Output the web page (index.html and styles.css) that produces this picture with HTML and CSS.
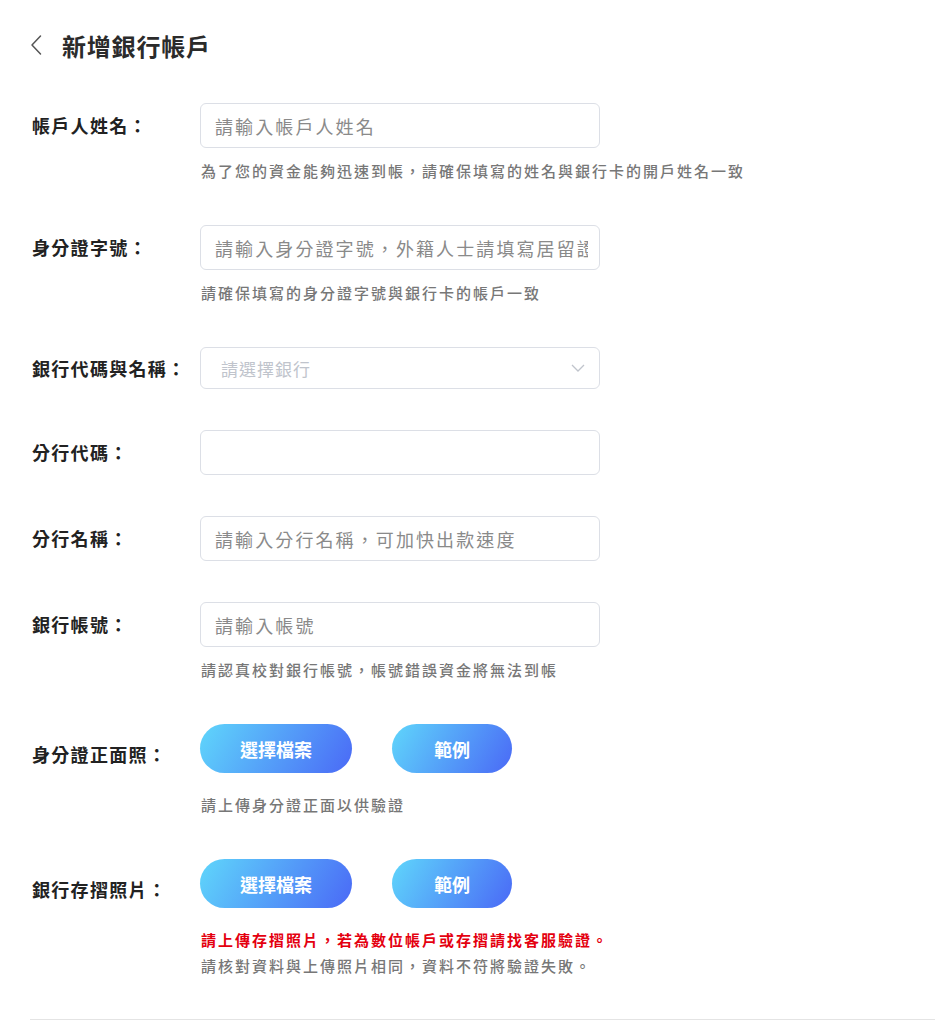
FILE: index.html
```html
<!DOCTYPE html>
<html lang="zh-Hant">
<head>
<meta charset="utf-8">
<title>新增銀行帳戶</title>
<link rel="stylesheet" href="styles.css">
</head>
<body>
<div class="page">
  <header class="header">
    <svg class="back" width="14" height="22" viewBox="0 0 14 22"><path d="M10.5 2 L2 11 L10.5 20" fill="none" stroke="#555" stroke-width="1.5" stroke-linecap="round" stroke-linejoin="round"/></svg>
    <h1 class="title">新增銀行帳戶</h1>
  </header>

  <form class="form">
    <div class="row">
      <label class="label">帳戶人姓名：</label>
      <div class="field">
        <div class="input"><span class="ph">請輸入帳戶人姓名</span></div>
        <p class="hint">為了您的資金能夠迅速到帳，請確保填寫的姓名與銀行卡的開戶姓名一致</p>
      </div>
    </div>

    <div class="row">
      <label class="label">身分證字號：</label>
      <div class="field">
        <div class="input"><span class="ph">請輸入身分證字號，外籍人士請填寫居留證</span></div>
        <p class="hint">請確保填寫的身分證字號與銀行卡的帳戶一致</p>
      </div>
    </div>

    <div class="row">
      <label class="label label-sel">銀行代碼與名稱：</label>
      <div class="field">
        <div class="select"><span class="ph-light">請選擇銀行</span>
          <svg class="arrow" width="14" height="8" viewBox="0 0 14 8"><path d="M1 1 L7 7 L13 1" fill="none" stroke="#c0c4cc" stroke-width="1.3"/></svg>
        </div>
      </div>
    </div>

    <div class="row">
      <label class="label">分行代碼：</label>
      <div class="field">
        <div class="input"></div>
      </div>
    </div>

    <div class="row">
      <label class="label">分行名稱：</label>
      <div class="field">
        <div class="input"><span class="ph">請輸入分行名稱，可加快出款速度</span></div>
      </div>
    </div>

    <div class="row">
      <label class="label">銀行帳號：</label>
      <div class="field">
        <div class="input"><span class="ph">請輸入帳號</span></div>
        <p class="hint">請認真校對銀行帳號，帳號錯誤資金將無法到帳</p>
      </div>
    </div>

    <div class="row">
      <label class="label label-btn">身分證正面照：</label>
      <div class="field">
        <div class="btns">
          <button type="button" class="btn btn-file">選擇檔案</button>
          <button type="button" class="btn btn-ex">範例</button>
        </div>
        <p class="hint hint-btn">請上傳身分證正面以供驗證</p>
      </div>
    </div>

    <div class="row">
      <label class="label label-btn">銀行存摺照片：</label>
      <div class="field">
        <div class="btns">
          <button type="button" class="btn btn-file">選擇檔案</button>
          <button type="button" class="btn btn-ex">範例</button>
        </div>
        <p class="hint hint-btn hint-red">請上傳存摺照片，若為數位帳戶或存摺請找客服驗證。</p>
        <p class="hint">請核對資料與上傳照片相同，資料不符將驗證失敗。</p>
      </div>
    </div>
  </form>
  <div class="divider"></div>
</div>
</body>
</html>
```

FILE: styles.css
```css
html, body {
  margin: 0;
  padding: 0;
  background: #fff;
}
body {
  font-family: "Noto Sans CJK TC", "Noto Sans", sans-serif;
  color: #222;
}
.page {
  padding: 0 16px 0 30px;
}
.header {
  display: flex;
  align-items: center;
  height: 42px;
  padding-top: 24px;
}
.back {
  margin-left: 0;
  margin-right: 18px;
}
.title {
  margin: 0;
  font-size: 24px;
  font-weight: 600;
  color: #2b2b2b;
  letter-spacing: 0.8px;
}
.form {
  margin-top: 37px;
  padding-left: 2px;
}
.row {
  display: flex;
  align-items: flex-start;
  margin-bottom: 41px;
}
.label {
  width: 168px;
  flex: none;
  font-size: 18px;
  font-weight: 700;
  letter-spacing: 1.3px;
  color: #222;
  line-height: 45px;
}
.label-sel {
  line-height: 42px;
}
.label-btn {
  line-height: 49px;
  padding-top: 6px;
}
.field {
  display: flex;
  flex-direction: column;
}
.input, .select {
  box-sizing: border-box;
  width: 400px;
  height: 45px;
  border: 1px solid #dcdfe6;
  border-radius: 6px;
  background: #fff;
  display: flex;
  align-items: center;
  padding: 0 11px 0 14px;
}
.select {
  height: 42px;
  padding-left: 20px;
  justify-content: space-between;
  padding-right: 14px;
}
.ph {
  display: block;
  flex: 1;
  min-width: 0;
  overflow: hidden;
  white-space: nowrap;
  font-size: 18px;
  letter-spacing: 2.1px;
  color: #8a8a8a;
  font-weight: 400;
}
.ph-light {
  font-size: 17px;
  letter-spacing: 1px;
  color: #c0c4cc;
}
.hint {
  margin: 10px 0 0 1px;
  font-size: 15px;
  line-height: 26px;
  font-weight: 500;
  letter-spacing: 2px;
  color: #777;
}
.hint-btn {
  margin-top: 19px;
}
.hint + .hint {
  margin-top: 0;
}
.hint-red {
  color: #e4000f;
  font-weight: 700;
}
.btns {
  display: flex;
  gap: 40px;
}
.btn {
  height: 49px;
  border: none;
  border-radius: 25px;
  background: linear-gradient(120deg, #5fd6fb 0%, #4a69f6 100%);
  color: #fff;
  font-family: "Noto Sans CJK TC", "Noto Sans", sans-serif;
  font-size: 18px;
  font-weight: 700;
  padding: 0;
  letter-spacing: 0;
}
.btn-file {
  width: 152px;
}
.btn-ex {
  width: 120px;
}
.divider {
  margin-top: -1px;
  height: 1px;
  background: #e4e4e4;
  width: 905px;
}
```
